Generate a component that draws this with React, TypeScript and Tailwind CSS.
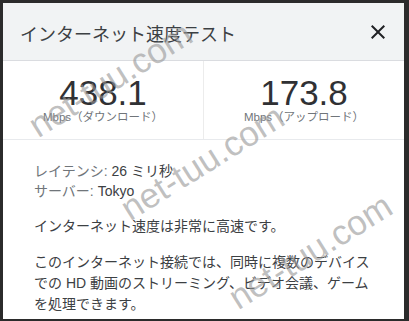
import React from "react";

const sans = "font-['Liberation_Sans','Noto_Sans_CJK_JP',sans-serif]";

function Watermark({ className }: { className: string }) {
  return (
    <div
      className={`pointer-events-none absolute -translate-x-1/2 -translate-y-1/2 -rotate-[32deg] whitespace-nowrap text-[35px] leading-none text-[rgba(150,150,150,0.6)] ${sans} ${className}`}
    >
      net-tuu.com
    </div>
  );
}

function Stat({ value, label }: { value: string; label: string }) {
  return (
    <div className="flex flex-1 flex-col items-center pt-[14px] pb-[15px]">
      <div className="text-[35px] leading-[35px] text-[#303134]">{value}</div>
      <div className="text-[11.5px] leading-[14px] text-[#70757a]">{label}</div>
    </div>
  );
}

export default function App() {
  return (
    <div className={`relative h-[321px] w-[409px] overflow-hidden bg-[#2b2b2b] pt-[3px] pl-[3px] pr-[5px] pb-[2px] ${sans}`}>
      <div className="flex h-full flex-col bg-white">
        <div className="flex h-[58px] items-center justify-between border-b border-[#dadce0] bg-[#f1f3f4] pl-[17px] pr-[14px]">
          <h1 className="mt-[6px] text-[18px] leading-[24px] text-[#3c4043]">インターネット速度テスト</h1>
          <svg viewBox="0 0 24 24" className="h-6 w-6 fill-[#202124]">
            <path d="M19 6.41L17.59 5 12 10.59 6.41 5 5 6.41 10.59 12 5 17.59 6.41 19 12 13.41 17.59 19 19 17.59 13.41 12z" />
          </svg>
        </div>

        <div className="flex border-b border-[#e8eaed]">
          <Stat value="438.1" label="Mbps（ダウンロード）" />
          <div className="w-px bg-[#ececec]" />
          <Stat value="173.8" label="Mbps（アップロード）" />
        </div>

        <div className="pt-[21px] pl-[31px] text-[14px]">
          <div className="leading-[20px] text-[#70757a]">
            <div>
              レイテンシ: <span className="text-[#3c4043]">26 ミリ秒</span>
            </div>
            <div>
              サーバー: <span className="text-[#3c4043]">Tokyo</span>
            </div>
          </div>
          <p className="mt-[15px] w-[340px] leading-[21px] text-[#3c4043]">インターネット速度は非常に高速です。</p>
          <p className="mt-[15px] w-[340px] leading-[21px] text-[#3c4043]">
            このインターネット接続では、同時に複数のデバイスでの HD 動画のストリーミング、ビデオ会議、ゲームを処理できます。
          </p>
        </div>
      </div>

      <Watermark className="left-[110px] top-[79px]" />
      <Watermark className="left-[202px] top-[162px]" />
      <Watermark className="left-[310px] top-[251px]" />
    </div>
  );
}
